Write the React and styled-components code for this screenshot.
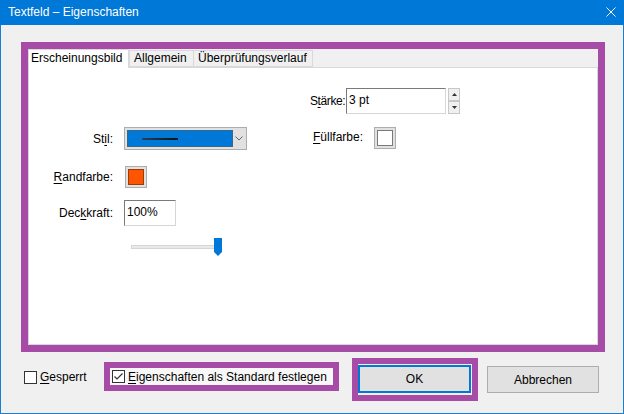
import React from "react";
import styled, { createGlobalStyle } from "styled-components";

// Textfeld – Eigenschaften dialog (Windows 10 look)

const GlobalStyle = createGlobalStyle`
  html, body {
    margin: 0;
    padding: 0;
    background: #ffffff;
  }
  * {
    box-sizing: border-box;
  }
`;

const Window = styled.div`
  width: 624px;
  height: 414px;
  border: 1px solid #1a7fd4;
  border-top: none;
  background: #f0f0f0;
  font-family: "Liberation Sans", Arial, sans-serif;
  font-size: 12px;
  color: #000;
  display: flex;
  flex-direction: column;
`;

const TitleBar = styled.div`
  height: 25px;
  margin: 0 -1px;
  background: #0078d7;
  color: #fff;
  display: flex;
  align-items: center;
  justify-content: space-between;
  padding: 0 8px 1px 8px;
`;

const Title = styled.span`
  font-size: 12px;
`;

const Body = styled.div`
  flex: 1;
  padding: 17px 18px 0 20px;
  display: flex;
  flex-direction: column;
`;

// purple highlight box drawn around parts of the screenshot
const Highlight = styled.div`
  border: ${(p) => p.$w || 6}px solid #a64ca6;
  background: ${(p) => p.$bg || "#f0f0f0"};
  padding: ${(p) => p.$pad || "0"};
`;

const Frame = styled(Highlight)`
  width: 584px;
  height: 310px;
  display: flex;
  flex-direction: column;
`;

const TabStrip = styled.div`
  height: 18px;
  display: flex;
  align-items: flex-end;
  position: relative;
  z-index: 1;
`;

const Tab = styled.div`
  width: ${(p) => p.$w}px;
  height: ${(p) => (p.$active ? 19 : 17)}px;
  margin-bottom: ${(p) => (p.$active ? -1 : 0)}px;
  margin-right: ${(p) => (p.$active ? 0 : -1)}px;
  background: ${(p) => (p.$active ? "#ffffff" : "#f0f0f0")};
  border: 1px solid #d9d9d9;
  border-bottom: ${(p) => (p.$active ? "none" : "1px solid #d9d9d9")};
  padding: ${(p) => (p.$active ? "1px 0 0 2px" : "0 0 0 4px")};
  line-height: 15px;
  white-space: nowrap;
`;

const Panel = styled.div`
  flex: 1;
  background: #ffffff;
  border: 1px solid #d9d9d9;
  padding-top: 20px;
  display: grid;
  grid-template-columns: 84px 11px 185px 1fr;
  grid-template-rows: 26px 13px 23px 16px 21px 13px 26px 12px 18px;
  align-content: start;
`;

const Label = styled.div`
  grid-column: 1;
  grid-row: ${(p) => p.$row};
  text-align: right;
  align-self: center;
  white-space: nowrap;
`;

const Control = styled.div`
  grid-column: 3;
  grid-row: ${(p) => p.$row};
  display: flex;
  align-items: center;
`;

const Field = styled.div`
  grid-column: 4;
  grid-row: ${(p) => p.$row};
  display: flex;
  align-items: ${(p) => (p.$top ? "flex-start" : "center")};
`;

const FieldLabel = styled.span`
  width: ${(p) => p.$w}px;
  white-space: nowrap;
  padding-top: ${(p) => p.$pt || 0}px;
  padding-left: ${(p) => p.$pl || 0}px;
  letter-spacing: ${(p) => p.$ls || 0}px;
`;

const Key = styled.span`
  text-decoration: underline;
  text-underline-offset: 2px;
`;

const Combo = styled.div`
  width: 123px;
  height: 23px;
  background: #e1e1e1;
  border: 1px solid #adadad;
  display: flex;
  align-items: center;
  padding: 2px;
`;

const ComboValue = styled.div`
  width: 106px;
  height: 17px;
  background: #0078d7;
  outline: 1px dotted #6a5a4a;
  outline-offset: -1px;
  display: flex;
  align-items: center;
  padding-left: 15px;
`;

const Stroke = styled.div`
  width: 36px;
  height: 2px;
  background: linear-gradient(90deg, #28405a, #101010);
`;

const Chevron = styled.div`
  flex: 1;
  display: flex;
  justify-content: center;
  color: #606060;
`;

const Swatch = styled.div`
  width: 22px;
  height: 22px;
  background: #e1e1e1;
  border: 1px solid #adadad;
  padding: 2px;
  margin-left: ${(p) => p.$ml || 0}px;
`;

const SwatchFill = styled.div`
  width: 100%;
  height: 100%;
  background: ${(p) => p.$color};
  border: 1px solid ${(p) => (p.$color === "#ffffff" ? "#7a7a7a" : "#9a3b10")};
`;

const TextInput = styled.div`
  width: ${(p) => p.$w}px;
  height: 26px;
  background: #ffffff;
  border: 1px solid #d6d6d6;
  border-top-color: #7a7a7a;
  border-left-color: #7a7a7a;
  padding: 4px 0 0 2px;
  line-height: 15px;
`;

const Spinner = styled.div`
  width: 12px;
  height: 26px;
  margin-left: 2px;
  display: flex;
  flex-direction: column;
`;

const SpinButton = styled.div`
  flex: 1;
  background: #f0f0f0;
  border: 1px solid #c8c8c8;
  display: flex;
  align-items: center;
  justify-content: center;
`;

const SliderWrap = styled.div`
  grid-column: 3;
  grid-row: 9;
  padding-left: 7px;
  display: flex;
  align-items: center;
`;

const Track = styled.div`
  width: 86px;
  height: 4px;
  background: #e7eaea;
  border: 1px solid #d6d6d6;
  position: relative;
`;

const Thumb = styled.svg`
  position: absolute;
  left: 82px;
  top: -8px;
`;

const Footer = styled.div`
  display: grid;
  grid-template-columns: 80px 248px 135px 112px;
  padding-left: 3px;
  align-items: start;
`;

const CheckRow = styled.label`
  display: flex;
  align-items: center;
  gap: 3px;
  margin-top: ${(p) => p.$mt}px;
  white-space: nowrap;
  font-size: 12px;
`;

const Box = styled.span`
  width: 13px;
  height: 13px;
  border: 1px solid #333333;
  background: #ffffff;
  display: flex;
  align-items: center;
  justify-content: center;
  flex: none;
`;

const DefaultBox = styled(Highlight)`
  width: 235px;
  height: 29px;
  margin-top: 10px;
  display: flex;
  align-items: center;
  padding-left: 2px;
`;

const OkBox = styled(Highlight)`
  width: 126px;
  height: 43px;
  margin-top: 6px;
  padding: 1px 1px 2px 0;
`;

const Button = styled.div`
  width: ${(p) => p.$w || 112}px;
  height: ${(p) => p.$h || 27}px;
  margin-top: ${(p) => p.$mt || 0}px;
  background: #e1e1e1;
  border: ${(p) => (p.$focus ? "2px solid #0078d7" : "1px solid #adadad")};
  display: flex;
  align-items: center;
  justify-content: center;
  font-size: 12px;
`;

const Check = () => (
  <svg width="11" height="11" viewBox="0 0 11 11">
    <path d="M1.5 5.5 L4 8 L9.5 2.5" fill="none" stroke="#333" strokeWidth="1.2" />
  </svg>
);

export default function App() {
  return (
    <>
      <GlobalStyle />
      <Window>
        <TitleBar>
          <Title>Textfeld – Eigenschaften</Title>
          <svg width="10" height="10" viewBox="0 0 10 10">
            <path d="M0.5 0.5 L9.5 9.5 M9.5 0.5 L0.5 9.5" stroke="#fff" strokeWidth="1" />
          </svg>
        </TitleBar>
        <Body>
          <Frame $w={7}>
            <TabStrip>
              <Tab $active $w={101}>Erscheinungsbild</Tab>
              <Tab $w={65}>Allgemein</Tab>
              <Tab $w={120}>Überprüfungsverlauf</Tab>
            </TabStrip>
            <Panel>
              <Field $row={1}>
                <FieldLabel $w={37} $pl={1} $ls={-0.4}>
                  S<Key>t</Key>ärke:
                </FieldLabel>
                <TextInput $w={100}>3 pt</TextInput>
                <Spinner>
                  <SpinButton>
                    <svg width="5" height="3" viewBox="0 0 5 3">
                      <path d="M0 3 L2.5 0 L5 3 Z" fill="#333" />
                    </svg>
                  </SpinButton>
                  <SpinButton>
                    <svg width="5" height="3" viewBox="0 0 5 3">
                      <path d="M0 0 L2.5 3 L5 0 Z" fill="#333" />
                    </svg>
                  </SpinButton>
                </Spinner>
              </Field>

              <Label $row={3}>
                St<Key>i</Key>l:
              </Label>
              <Control $row={3}>
                <Combo>
                  <ComboValue>
                    <Stroke />
                  </ComboValue>
                  <Chevron>
                    <svg width="8" height="5" viewBox="0 0 8 5">
                      <path d="M0.5 0.5 L4 4 L7.5 0.5" fill="none" stroke="#666" strokeWidth="1" />
                    </svg>
                  </Chevron>
                </Combo>
              </Control>
              <Field $row={3} $top>
                <FieldLabel $w={65} $pt={3} $pl={4}>
                  <Key>F</Key>üllfarbe:
                </FieldLabel>
                <Swatch>
                  <SwatchFill $color="#ffffff" />
                </Swatch>
              </Field>

              <Label $row={5}>
                <Key>R</Key>andfarbe:
              </Label>
              <Control $row={5}>
                <Swatch $ml={1}>
                  <SwatchFill $color="#ff5500" />
                </Swatch>
              </Control>

              <Label $row={7}>
                Dec<Key>k</Key>kraft:
              </Label>
              <Control $row={7}>
                <TextInput $w={52}>100%</TextInput>
              </Control>

              <SliderWrap>
                <Track>
                  <Thumb width="8" height="18" viewBox="0 0 8 18">
                    <path d="M0 0 H8 V14 L4 18 L0 14 Z" fill="#0078d7" />
                  </Thumb>
                </Track>
              </SliderWrap>
            </Panel>
          </Frame>

          <Footer>
            <CheckRow $mt={18}>
              <Box />
              <span>
                <Key>G</Key>esperrt
              </span>
            </CheckRow>
            <DefaultBox $bg="#f7f7f7">
              <CheckRow $mt={0}>
                <Box>
                  <Check />
                </Box>
                <span>
                  <Key>E</Key>igenschaften als Standard festlegen
                </span>
              </CheckRow>
            </DefaultBox>
            <OkBox>
              <Button $focus $w={113} $h={28}>
                OK
              </Button>
            </OkBox>
            <Button $mt={14}>Abbrechen</Button>
          </Footer>
        </Body>
      </Window>
    </>
  );
}
